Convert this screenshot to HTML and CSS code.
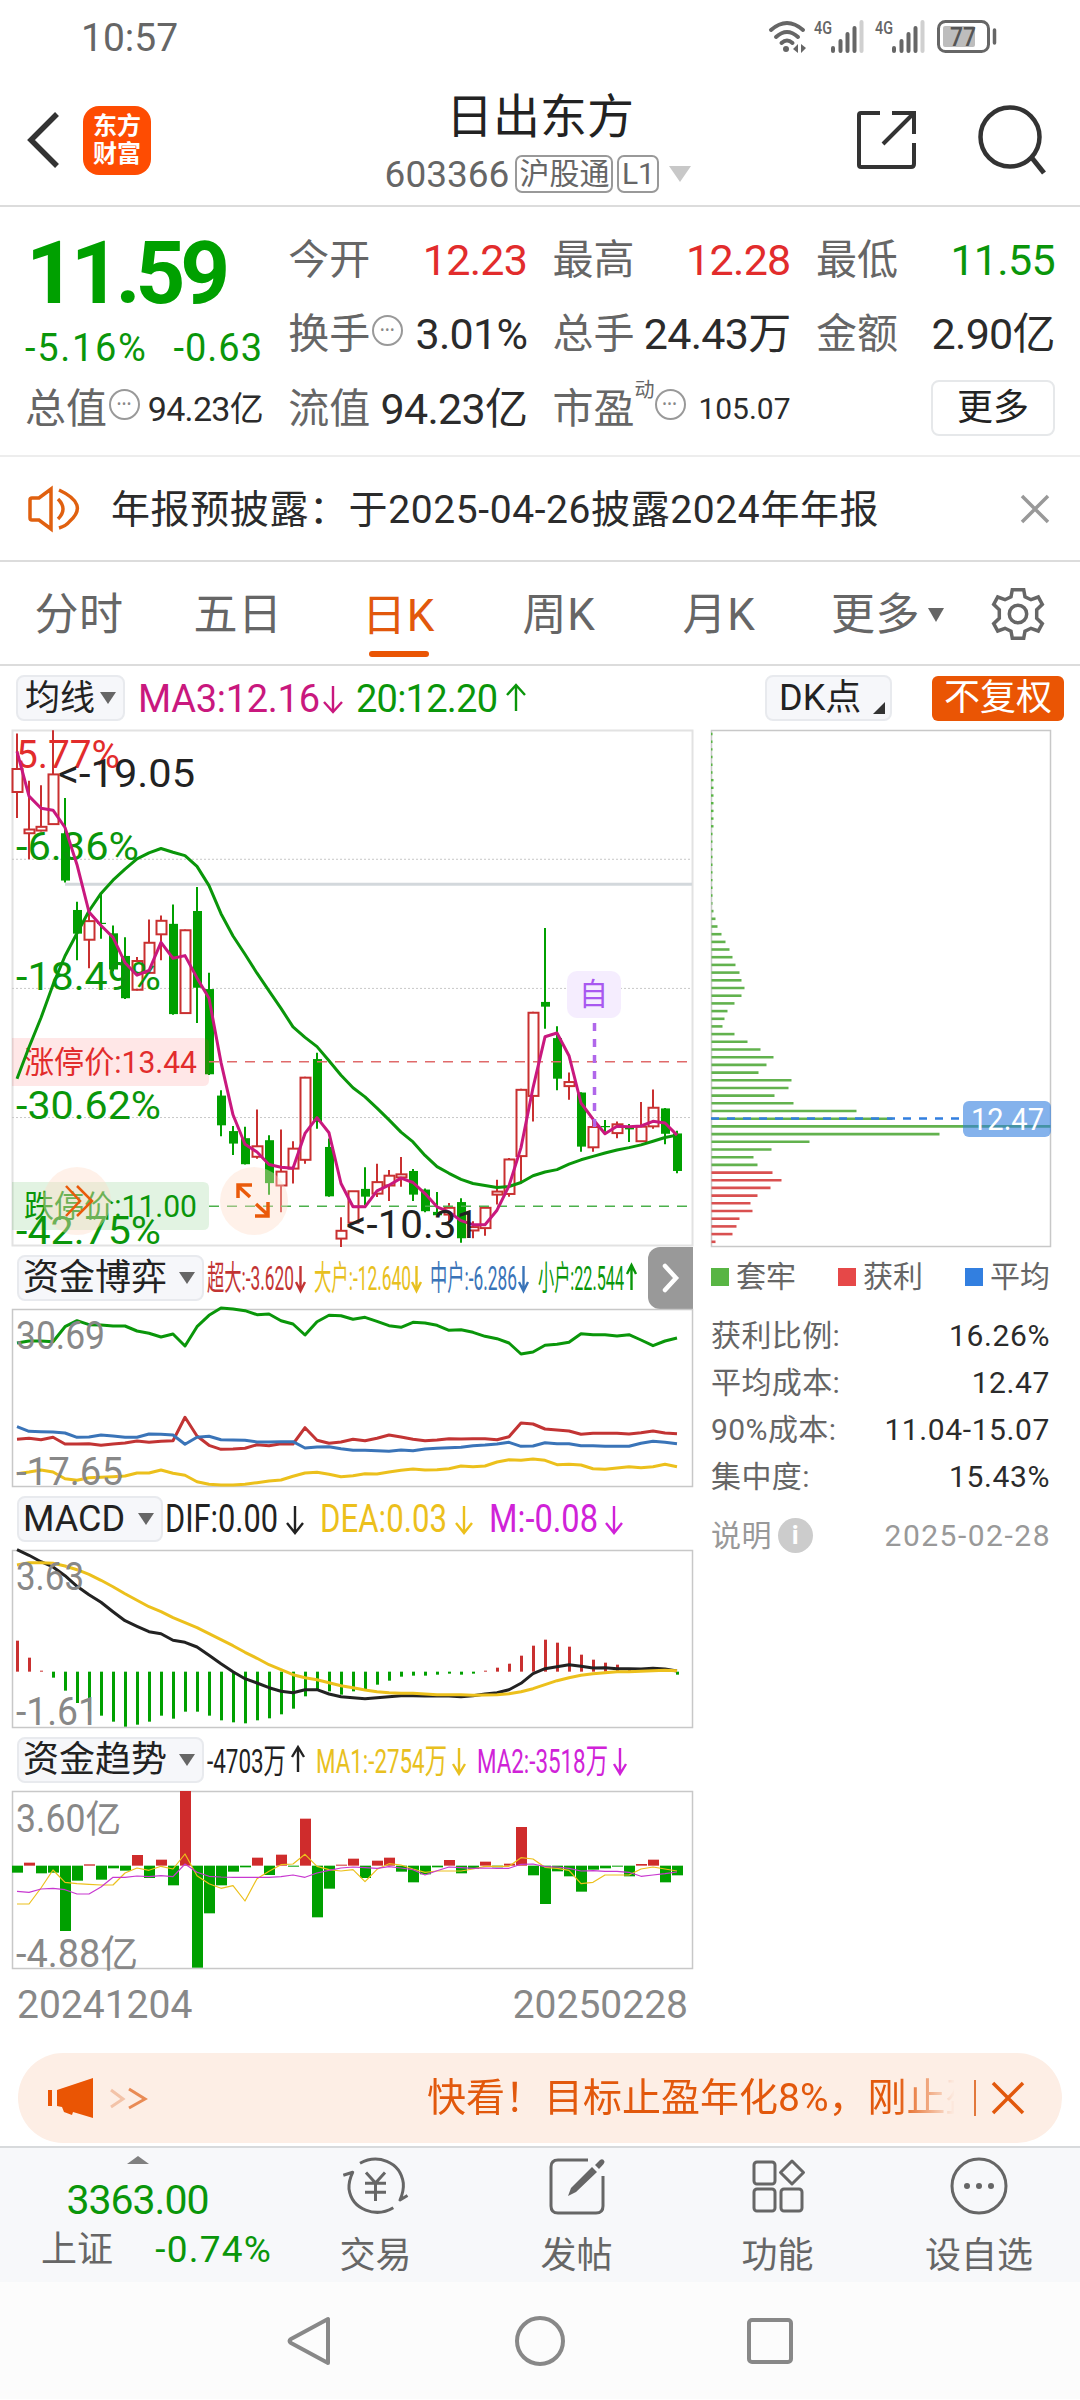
FILE: index.html
```html
<!DOCTYPE html>
<html lang="zh-CN">
<head>
    <meta charset="UTF-8">
    <meta name="viewport" content="width=device-width, initial-scale=1.0">
    <title>日出东方 603366</title>
    <link rel="stylesheet" href="styles.css">
</head>
<body>
    <!-- Status bar -->
    <div class="status-bar">
        <span class="time">10:57</span>
        <svg class="status-icons" width="232" height="36" viewBox="0 0 232 36">
            <g fill="none" stroke="#666" stroke-width="4" stroke-linecap="round">
                <path d="M3 11Q19 -3 35 11"/>
                <path d="M8 18Q19 8 30 18"/>
                <path d="M13.500 24Q19 19 24.500 24"/>
            </g>
            <circle cx="18" cy="30" r="3" fill="#666"/>
            <path d="M25 30l5-5v9zM38 29l-5-4v9z" fill="#666"/>
            <text x="46" y="15" class="net" textLength="18" lengthAdjust="spacingAndGlyphs">4G</text>
            <g stroke="#666" stroke-width="4" stroke-linecap="round">
                <path d="M65 29v3M72.500 22v10M79.500 15v17M86.500 9v23"/>
                <path d="M93.500 3v29" stroke="#d0d0d0"/>
            </g>
            <text x="107" y="15" class="net" textLength="18" lengthAdjust="spacingAndGlyphs">4G</text>
            <g stroke="#666" stroke-width="4" stroke-linecap="round">
                <path d="M126 29v3M133.500 22v10M140.500 15v17M147.500 9v23"/>
                <path d="M154.500 3v29" stroke="#d0d0d0"/>
            </g>
            <rect x="170.500" y="2.500" width="50" height="30" rx="7" fill="none" stroke="#666" stroke-width="3"/>
            <rect x="175" y="7" width="32" height="21" rx="2" fill="#bdbdbd"/>
            <text x="182" y="27" class="battery" textLength="26" lengthAdjust="spacingAndGlyphs">77</text>
            <path d="M226.500 11v13" stroke="#666" stroke-width="3.500" stroke-linecap="round"/>
        </svg>
    </div>

    <!-- Header -->
    <div class="header">
        <div class="header-side">
            <svg width="34" height="58" viewBox="0 0 34 58"><path d="M30 3L4 29L30 55" fill="none" stroke="#333" stroke-width="5.500"/></svg>
            <div class="logo"><span>东方</span><span>财富</span></div>
        </div>
        <div class="header-title">
            <div class="stock-name">日出东方</div>
            <div class="stock-code">
                <span>603366</span><span class="tag">沪股通</span><span class="tag tag-l1">L1</span>
                <svg width="22" height="16" viewBox="0 0 22 16"><path d="M0 0h22L11 16z" fill="#c8c8c8"/></svg>
            </div>
        </div>
        <div class="header-side header-right">
            <svg width="60" height="60" viewBox="0 0 60 60"><path d="M23 3H4Q2 3 2 5V55Q2 57 4 57H54Q57 57 57 54V33M35 3H57V24M57 3L26 34" fill="none" stroke="#333" stroke-width="4"/></svg>
            <svg width="70" height="72" viewBox="0 0 70 72"><circle cx="32" cy="33" r="29.500" fill="none" stroke="#333" stroke-width="4.500"/><path d="M54 54L66 69" stroke="#333" stroke-width="5"/></svg>
        </div>
    </div>

    <!-- Quote -->
    <div class="quote">
        <div class="price-box">
            <div class="price">11.59</div>
            <div class="change"><span>-5.16%</span><span>-0.63</span></div>
        </div>
        <div class="cell"><label>今开</label><b class="red">12.23</b></div>
        <div class="cell"><label>最高</label><b class="red">12.28</b></div>
        <div class="cell"><label>最低</label><b class="green">11.55</b></div>
        <div class="cell"><label>换手</label><i class="dots">•••</i><b>3.01%</b></div>
        <div class="cell"><label>总手</label><b>24.43万</b></div>
        <div class="cell"><label>金额</label><b>2.90亿</b></div>
        <div class="cell"><label>总值</label><i class="dots">•••</i><b class="small">94.23亿</b></div>
        <div class="cell"><label>流值</label><b>94.23亿</b></div>
        <div class="cell"><label>市盈</label><sup>动</sup><i class="dots">•••</i><b class="smaller">105.07</b></div>
        <div class="cell"><button class="more">更多</button></div>
    </div>

    <!-- Notice -->
    <div class="notice">
        <svg width="52" height="44" viewBox="0 0 52 44"><path d="M2 13Q2 11 4 11H11L23 2V42L11 33H4Q2 33 2 31ZM30 12Q40 22 30 32M31 3Q61 17 42 34Q38 39 31 41" fill="none" stroke="#e0600f" stroke-width="3.500"/></svg>
        <span class="notice-text">年报预披露：于2025-04-26披露2024年年报</span>
        <svg width="30" height="30" viewBox="0 0 30 30"><path d="M2 2L28 28M28 2L2 28" stroke="#999" stroke-width="3.500"/></svg>
    </div>

    <!-- Period tabs -->
    <div class="tabs">
        <span>分时</span>
        <span>五日</span>
        <span class="active">日K</span>
        <span>周K</span>
        <span>月K</span>
        <span>更多<svg width="16" height="14" viewBox="0 0 16 14"><path d="M0 0h16L8 14z" fill="#666"/></svg></span>
        <svg class="gear" width="54" height="54" viewBox="0 0 54 54"><path d="M21.300 2.700H32.700L34 9.700L40 12.700L47.300 10L51.300 17.300L45.700 22.700V31.300L51.300 36.700L47.300 44L40 41.300L34 44.300L32.700 51.300H21.300L20 44.300L14 41.300L6.700 44L2.700 36.700L8.300 31.300V22.700L2.700 17.300L6.700 10L14 12.700L20 9.700Z" fill="none" stroke="#666" stroke-width="3.500"/><circle cx="27" cy="27" r="8.700" fill="none" stroke="#666" stroke-width="3.500"/></svg>
    </div>

    <!-- Chart toolbar -->
    <div class="toolbar">
        <div class="select select-ma">均线<i class="caret"></i></div>
        <svg class="legend" width="400" height="46">
            <text x="0" y="37" textLength="182" fill="#c9187e">MA3:12.16</text><path class="arrow" d="M195 11V36M186 27L195 37L204 27" stroke="#c9187e"/>
            <text x="218" y="37" textLength="142" fill="#0a960a">20:12.20</text><path class="arrow" d="M378 36V11M369 20L378 10L387 20" stroke="#0a960a"/>
        </svg>
        <div class="select select-dk">DK点<i class="corner"></i></div>
        <div class="no-adjust">不复权</div>
    </div>

    <div class="board">
        <div class="charts">
            <svg class="chart" id="kline" width="681" height="516"></svg>

            <div class="chart-head">
                <div class="select">资金博弈<i class="caret"></i></div>
                <svg class="legend small-legend" width="440" height="46">
                    <text x="0" y="35" textLength="87" lengthAdjust="spacingAndGlyphs" fill="#c23434">超大:-3.620</text><path class="arrow" d="M93.500 11V35M89 27L93.500 36L98 27" stroke="#c23434"/>
                    <text x="107" y="35" textLength="97" lengthAdjust="spacingAndGlyphs" fill="#e8c020">大户:-12.640</text><path class="arrow" d="M209.500 11V35M205 27L209.500 36L214 27" stroke="#e8c020"/>
                    <text x="223" y="35" textLength="87" lengthAdjust="spacingAndGlyphs" fill="#3a74b8">中户:-6.286</text><path class="arrow" d="M316.500 11V35M312 27L316.500 36L321 27" stroke="#3a74b8"/>
                    <text x="331" y="35" textLength="86" lengthAdjust="spacingAndGlyphs" fill="#0a960a">小户:22.544</text><path class="arrow" d="M424.500 35V11M420 19L424.500 10L429 19" stroke="#0a960a"/>
                </svg>
                <div class="next"><svg width="18" height="30" viewBox="0 0 18 30"><path d="M3 3L14 15L3 27" fill="none" stroke="#fff" stroke-width="4.500" stroke-linecap="round"/></svg></div>
            </div>
            <svg class="chart" id="fund" width="681" height="178"></svg>

            <div class="chart-head">
                <div class="select select-macd">MACD<i class="caret"></i></div>
                <svg class="legend" width="480" height="46">
                    <text x="0" y="36" textLength="113" lengthAdjust="spacingAndGlyphs" fill="#222">DIF:0.00</text><path class="arrow" d="M130 10V36M122 27L130 37L138 27" stroke="#222"/>
                    <text x="155" y="36" textLength="127" lengthAdjust="spacingAndGlyphs" fill="#ecc01c">DEA:0.03</text><path class="arrow" d="M299 10V36M291 27L299 37L307 27" stroke="#ecc01c"/>
                    <text x="324" y="36" textLength="109" lengthAdjust="spacingAndGlyphs" fill="#d022d8">M:-0.08</text><path class="arrow" d="M449 10V36M441 27L449 37L457 27" stroke="#d022d8"/>
                </svg>
            </div>
            <svg class="chart" id="macd" width="681" height="178"></svg>

            <div class="chart-head">
                <div class="select">资金趋势<i class="caret"></i></div>
                <svg class="legend small-legend trend-legend" width="440" height="46">
                    <text x="0" y="36" textLength="79" lengthAdjust="spacingAndGlyphs" fill="#222">-4703万</text><path class="arrow" d="M91 35V11M85 20L91 10L97 20" stroke="#222"/>
                    <text x="109" y="36" textLength="131" lengthAdjust="spacingAndGlyphs" fill="#e8c020">MA1:-2754万</text><path class="arrow" d="M252 11V35M246 27L252 37L258 27" stroke="#e8c020"/>
                    <text x="270" y="36" textLength="131" lengthAdjust="spacingAndGlyphs" fill="#d022d8">MA2:-3518万</text><path class="arrow" d="M413 11V35M407 27L413 37L419 27" stroke="#d022d8"/>
                </svg>
            </div>
            <svg class="chart" id="trend" width="681" height="178"></svg>

            <div class="dates"><span>20241204</span><span>20250228</span></div>
        </div>

        <div class="chips">
            <svg class="chart" id="chips" width="340" height="516"></svg>
            <div class="chip-legend">
                <span><i class="sq sq-green"></i>套牢</span>
                <span><i class="sq sq-red"></i>获利</span>
                <span><i class="sq sq-blue"></i>平均</span>
            </div>
            <div class="chip-row"><label>获利比例:</label><b>16.26%</b></div>
            <div class="chip-row"><label>平均成本:</label><b>12.47</b></div>
            <div class="chip-row"><label>90%成本:</label><b>11.04-15.07</b></div>
            <div class="chip-row"><label>集中度:</label><b>15.43%</b></div>
            <div class="chip-row chip-note"><label>说明<i class="info">i</i></label><span>2025-02-28</span></div>
        </div>
    </div>

    <!-- Promo banner -->
    <div class="banner">
        <svg width="102" height="42" viewBox="0 0 102 42">
            <path d="M4 13V29" stroke="#ea5504" stroke-width="4"/>
            <path d="M11 13L47 1V41L27 35L26 38L18 35L16 30L11 29Z" fill="#ea5504"/>
            <path d="M65 13L77 22L65 30" fill="none" stroke="#f3c3a8" stroke-width="3"/>
            <path d="M83 12L99 22L83 31" fill="none" stroke="#e98b55" stroke-width="3"/>
        </svg>
        <div class="banner-text">快看！目标止盈年化8%，刚止盈</div>
        <i class="banner-line"></i>
        <svg width="34" height="34" viewBox="0 0 34 34"><path d="M2 2L32 32M32 2L2 32" stroke="#e2580c" stroke-width="3.500"/></svg>
    </div>

    <!-- Bottom bar -->
    <div class="bottom-bar">
        <div class="index">
            <svg width="22" height="8" viewBox="0 0 22 8"><path d="M0 8L11 0L22 8z" fill="#808080"/></svg>
            <div class="index-value">3363.00</div>
            <div class="index-row"><span>上证</span><span class="green">-0.74%</span></div>
        </div>
        <div class="item">
            <svg width="68" height="60" viewBox="0 0 68 60"><g fill="none" stroke="#666" stroke-width="3" stroke-linejoin="round"><path d="M18 7.300C35 -2 58 5 61.300 27Q62 35 58 44L65.500 39.500M51.300 51.700C34 62 10 54 7 33Q6.500 25 10.700 16.300L1.300 19.300"/><path d="M24 16.500L33.500 27L43 16.500M33.500 27V45M23 27.300H44M23 36.300H44"/></g></svg>
            <span>交易</span>
        </div>
        <div class="item">
            <svg width="60" height="60" viewBox="0 0 60 60"><path d="M41 4H11Q4 4 4 11V50Q4 57 11 57H49Q56 57 56 50V20" fill="none" stroke="#666" stroke-width="3"/><path d="M45 11L50 16L29 36L21 40L24 32ZM48 9L53 4Q56 2 57.500 5.500Q58 7 52 13Z" fill="#666"/></svg>
            <span>发帖</span>
        </div>
        <div class="item">
            <svg width="56" height="60" viewBox="0 0 56 60"><g fill="none" stroke="#666" stroke-width="3"><rect x="4" y="6" width="21" height="22" rx="3"/><rect x="4" y="33" width="21" height="22" rx="3"/><rect x="31" y="33" width="21" height="22" rx="3"/><path d="M42 5L53.500 16.500L42 28L30.500 16.500Z" stroke-linejoin="round"/></g></svg>
            <span>功能</span>
        </div>
        <div class="item">
            <svg width="60" height="60" viewBox="0 0 60 60"><circle cx="30" cy="30" r="27" fill="none" stroke="#666" stroke-width="3"/><g fill="#666"><circle cx="18" cy="30" r="3"/><circle cx="30" cy="30" r="3"/><circle cx="42" cy="30" r="3"/></g></svg>
            <span>设自选</span>
        </div>
    </div>

    <!-- System navigation -->
    <div class="nav-bar">
        <svg width="46" height="52" viewBox="0 0 46 52"><path d="M41 4V48L4 28Q1 26 4 24Z" fill="none" stroke="#888" stroke-width="4" stroke-linejoin="round"/></svg>
        <svg width="52" height="52" viewBox="0 0 52 52"><circle cx="26" cy="26" r="23" fill="none" stroke="#888" stroke-width="4"/></svg>
        <svg width="46" height="46" viewBox="0 0 46 46"><rect x="2" y="2" width="42" height="42" rx="3" fill="none" stroke="#888" stroke-width="4"/></svg>
    </div>

    <script src="script.js"></script>
</body>
</html>
```
FILE: styles.css
```css
* {
    box-sizing: border-box;
}

body {
    font-family: Roboto, 'Noto Sans CJK SC', sans-serif;
    background-color: #fff;
    color: #2b2b2b;
    margin: 0;
    width: 1080px;
    line-height: 1;
}

svg {
    display: block;
    flex-shrink: 0;
    overflow: visible;
}

b, i, label {
    font-weight: normal;
    font-style: normal;
}

.red { color: #e22c2c !important; }
.green { color: #0a960a !important; }

/* Status bar */
.status-bar {
    height: 72px;
    padding: 2px 80px 0 81px;
    display: flex;
    align-items: center;
    justify-content: space-between;
    color: #666;
}

.time {
    font-size: 39px;
    padding-top: 3px;
}

.net {
    font-size: 18px;
    font-weight: 500;
    fill: #666;
}

.battery {
    font-size: 25px;
    font-weight: 500;
    fill: #555;
}

/* Header */
.header {
    height: 135px;
    border-bottom: 2px solid #dcdcdc;
    display: grid;
    grid-template-columns: 280px 520px 280px;
}

.header-side {
    display: flex;
    align-items: center;
    gap: 22px;
    padding: 3px 0 0 27px;
}

.header-right {
    justify-content: flex-end;
    gap: 61px;
    padding: 3px 32px 0 0;
}

.logo {
    width: 68px;
    height: 69px;
    border-radius: 16px;
    background-color: #fe4c02;
    color: #fff;
    font-size: 24px;
    font-weight: bold;
    display: flex;
    flex-direction: column;
    align-items: center;
    justify-content: center;
    gap: 4px;
}

.header-title {
    text-align: center;
    padding-top: 20px;
}

.stock-name {
    font-size: 47px;
    line-height: 50px;
    color: #222;
}

.stock-code {
    display: flex;
    align-items: center;
    justify-content: center;
    margin-top: 13px;
    font-size: 37px;
    color: #666;
    padding-right: 4px;
}

.tag {
    border: 2px solid #999;
    border-radius: 7px;
    height: 38px;
    width: 98px;
    font-size: 30px;
    line-height: 34px;
    margin-left: 6px;
}

.tag-l1 {
    width: 42px;
    margin-left: 4px;
    margin-right: 10px;
}

/* Quote */
.quote {
    height: 250px;
    border-bottom: 2px solid #ededed;
    padding: 15px 25px 0 25px;
    display: grid;
    grid-template-columns: 238px 239px 238px 239px;
    grid-auto-rows: 74.5px;
    column-gap: 25.3px;
}

.price-box {
    grid-row: span 2;
    color: #00a000;
}

.price {
    font-size: 87px;
    font-weight: bold;
    letter-spacing: -5.2px;
    margin: 8px 0 0 1px;
}

.change {
    display: flex;
    justify-content: space-between;
    font-size: 38px;
    color: #0a960a;
    margin-top: 12px;
}

.change span:first-child {
    letter-spacing: 1.7px;
}

.change span:last-child {
    letter-spacing: 1px;
}

.cell {
    display: flex;
    align-items: center;
    white-space: nowrap;
}

.cell label {
    font-size: 41px;
    padding-top: 2px;
    color: #666;
}

.cell b {
    font-size: 43px;
    margin-left: auto;
    padding-top: 2px;
    letter-spacing: -0.7px;
}

.cell .small {
    font-size: 34px;
}

.cell .smaller {
    font-size: 30px;
    letter-spacing: 0;
}

.cell sup {
    font-size: 20px;
    color: #666;
    align-self: flex-start;
    margin-top: 9px;
    margin-right: -2px;
}

.dots {
    width: 31px;
    height: 31px;
    border: 2px solid #999;
    border-radius: 50%;
    color: #888;
    font-size: 12px;
    line-height: 26px;
    letter-spacing: 1px;
    text-align: center;
    margin: -7px 0 0 2px;
}

.more {
    margin-left: auto;
    width: 124px;
    height: 56px;
    border: 2px solid #e6e8ea;
    border-radius: 8px;
    background-color: #fff;
    font-family: inherit;
    font-size: 36px;
    color: #222;
    padding: 0;
    line-height: 1;
}

/* Notice */
.notice {
    height: 105px;
    border-bottom: 2px solid #dcdcdc;
    padding: 1px 30px 0 28px;
    display: flex;
    align-items: center;
}

.notice-text {
    flex: 1;
    margin-left: 31px;
    font-size: 39px;
    letter-spacing: 0.6px;
    padding-top: 2px;
}

/* Tabs */
.tabs {
    height: 104px;
    border-bottom: 2px solid #dcdcdc;
    padding-top: 2px;
    display: grid;
    grid-template-columns: 158px 160px 161px 160px 160px 177px 84px;
    align-items: center;
    justify-items: center;
    font-size: 44px;
    color: #666;
}

.tabs span {
    display: flex;
    align-items: center;
    letter-spacing: 0.6px;
    padding-top: 2px;
}

.tabs span svg {
    margin-left: 8px;
}

.tabs .active {
    color: #e2580c;
    flex-direction: column;
    margin-bottom: -20px;
}

.tabs .active::after {
    content: "";
    width: 60px;
    height: 6px;
    margin-top: 13px;
    border-radius: 3px;
    background-color: #ea5504;
}

/* Toolbar and chart headers */
.toolbar {
    height: 64px;
    padding: 0 16px;
    display: flex;
    align-items: center;
}

.chart-head {
    height: 63px;
    padding-left: 5px;
    display: flex;
    align-items: center;
}

.select {
    height: 46px;
    width: 187px;
    border: 2px solid #e8eaee;
    border-radius: 8px;
    background-color: #f6f7fa;
    color: #222;
    font-size: 36px;
    display: flex;
    align-items: center;
    justify-content: space-between;
    padding: 0 7px 0 4px;
    flex-shrink: 0;
}

.select-ma {
    width: 109px;
    font-size: 35px;
    padding-left: 7px;
}

.select-macd {
    width: 146px;
}

.select-dk {
    width: 127px;
    margin-left: auto;
    padding: 0 5px 0 12px;
}

.caret {
    border: 8px solid transparent;
    border-top: 12px solid #666;
    border-bottom: 0;
}

.corner {
    border-left: 12px solid transparent;
    border-bottom: 12px solid #333;
    align-self: flex-end;
    margin-bottom: 5px;
}

.no-adjust {
    width: 132px;
    height: 45px;
    margin-left: 40px;
    border-radius: 6px;
    background-color: #ea5504;
    color: #fff;
    font-size: 36px;
    line-height: 45px;
    text-align: center;
}

.legend {
    margin-left: 2px;
    font-size: 38px;
}

.toolbar .legend {
    margin-left: 13px;
}

.small-legend {
    font-size: 34px;
    margin-left: 3px;
}

.arrow {
    fill: none;
    stroke-width: 2.4px;
}

.next {
    width: 45px;
    height: 62px;
    margin-left: 1px;
    background-color: #999;
    border-radius: 12px 0 0 12px;
    display: flex;
    align-items: center;
    justify-content: center;
}

/* Charts */
.board {
    display: flex;
    padding-left: 12px;
    gap: 18px;
}

.charts {
    width: 681px;
}

.chart .frame {
    fill: none;
    stroke: #c8c8c8;
    stroke-width: 1.5px;
}

#kline .frame {
    stroke: #e2e2e2;
    stroke-width: 2px;
}

.axis {
    font-size: 38px;
    fill: #888;
}

.mark {
    font-size: 39px;
    fill: #222;
}

.badge {
    font-size: 31px;
}

.dates {
    display: flex;
    justify-content: space-between;
    padding: 17px 5px 0 5px;
    height: 84px;
    font-size: 39px;
    color: #888;
}

/* Chip distribution */
.chips {
    width: 339px;
}

.chip-legend {
    display: flex;
    justify-content: space-between;
    height: 62px;
    align-items: center;
    font-size: 30px;
    color: #666;
}

.chip-legend span {
    display: flex;
    align-items: center;
}

.sq {
    width: 18px;
    height: 18px;
    margin-right: 7px;
}

.sq-green { background-color: #58b544; }
.sq-red { background-color: #e64848; }
.sq-blue { background-color: #327fe0; }

.chip-row {
    height: 47px;
    display: flex;
    align-items: center;
    justify-content: space-between;
    font-size: 30px;
}

.chip-row label {
    color: #666;
    display: flex;
    align-items: center;
    letter-spacing: 0.4px;
}

.chip-row b {
    letter-spacing: 0.6px;
}

.chip-legend + .chip-row {
    margin-top: 4px;
}

.chip-note,
.chip-note label {
    color: #999;
}

.chip-note {
    margin-top: 12px;
}

.chip-note span {
    letter-spacing: 1.5px;
    margin-right: -1px;
}

.info {
    width: 35px;
    height: 35px;
    border-radius: 50%;
    background-color: #ccc;
    color: #fff;
    font-size: 26px;
    font-weight: bold;
    line-height: 35px;
    text-align: center;
    margin-left: 6px;
}

/* Banner */
.banner {
    height: 90px;
    margin: 0 18px 3px 18px;
    border-radius: 45px;
    background-color: #fdeee5;
    padding: 0 37px 0 28px;
    display: flex;
    align-items: center;
}

.banner-text {
    width: 528px;
    margin-left: 279px;
    overflow: hidden;
    white-space: nowrap;
    font-size: 39px;
    line-height: 60px;
    color: #e2580c;
    -webkit-mask-image: linear-gradient(to right, #000 470px, transparent 528px);
    mask-image: linear-gradient(to right, #000 470px, transparent 528px);
}

.banner-line {
    width: 2px;
    height: 36px;
    background-color: #e2783c;
    margin: 0 15px 0 20px;
}

/* Bottom bar */
.bottom-bar {
    height: 136px;
    border-top: 2px solid #d8dadc;
    background-color: #f7f8fa;
    display: grid;
    grid-template-columns: 275px 201px 201px 201px 202px;
}

.index {
    display: flex;
    flex-direction: column;
    align-items: center;
    padding-top: 8px;
    color: #666;
}

.index-value {
    font-size: 41px;
    letter-spacing: -1px;
    color: #0a960a;
    margin-top: 16px;
}

.index-row {
    width: 231px;
    margin-top: 10px;
    margin-left: 41px;
    align-self: flex-start;
    display: flex;
    justify-content: space-between;
    align-items: center;
    font-size: 36px;
}

.index-row .green {
    font-size: 37px;
    letter-spacing: 1.2px;
}

.item {
    display: flex;
    flex-direction: column;
    align-items: center;
    padding-top: 8px;
    font-size: 36px;
    color: #666;
}

.item span {
    margin-top: 22px;
}

/* System navigation */
.nav-bar {
    height: 117px;
    background-color: #fcfcfc;
    display: flex;
    align-items: center;
    justify-content: center;
    gap: 181px;
}
```
FILE: script.js
```js
const RED = '#c93030';
const GREEN = '#00a000';
const X0 = 5;      // first bar centre
const STEP = 12;   // distance between bars

// [high, open/close top, open/close bottom, low, up]
const candles = [
    [37,142,210,287,1],[177,321,332,409,1],[190,313,324,327,1],[27,158,305,307,1],[228,332,472,478,0],
    [535,559,629,708,0],[565,592,647,731,1],[512,597,600,644,0],[605,628,735,740,0],[640,695,820,822,0],
    [698,710,795,797,1],[587,656,745,745,1],[575,591,631,708,1],[543,600,867,869,0],[617,619,864,866,1],
    [491,562,789,893,0],[745,793,1045,1047,0],[1092,1108,1196,1228,0],[1198,1213,1250,1284,0],[1200,1234,1311,1312,0],
    [1149,1258,1289,1295,1],[1225,1240,1367,1401,0],[1208,1333,1374,1453,1],[1243,1265,1324,1368,1],[1052,1055,1298,1310,1],
    [981,1000,1186,1206,0],[1235,1260,1406,1407,0],[1468,1508,1531,1556,1],[1390,1391,1484,1488,1],[1320,1384,1407,1432,0],
    [1310,1364,1398,1408,1],[1328,1345,1374,1420,1],[1290,1341,1350,1378,1],[1325,1331,1401,1420,0],[1383,1386,1450,1453,0],
    [1393,1452,1462,1463,0],[1426,1440,1460,1485,1],[1412,1423,1530,1543,0],[1480,1497,1507,1530,1],[1438,1440,1500,1523,1],
    [1357,1392,1401,1430,1],[1293,1297,1399,1407,1],[1088,1091,1287,1368,1],[860,863,1109,1185,1],[612,831,845,910,0],
    [903,938,1058,1092,0],[1040,1068,1080,1120,1],[1098,1099,1259,1274,0],[1180,1201,1261,1274,1],[1180,1198,1200,1215,0],
    [1185,1193,1219,1234,1],[1192,1203,1208,1245,0],[1127,1200,1243,1245,1],[1090,1144,1199,1206,1],[1145,1146,1221,1252,0],
    [1212,1220,1331,1338,0]
];
const ma3 = [90,222,258,264,315,425,565,605,640,715,752,738,655,702,694,760,820,1010,1165,1252,1275,1312,1320,1323,1220,1173,1218,1368,1437,1437,1390,1373,1352,1365,1398,1437,1452,1478,1490,1490,1447,1375,1262,1085,934,923,990,1130,1178,1221,1199,1200,1198,1184,1189,1225];
const ma20 = [1058,965,878,780,695,628,562,510,471,438,408,390,377,388,398,430,487,570,636,690,746,798,850,905,936,963,1005,1048,1085,1112,1145,1180,1216,1245,1285,1318,1338,1356,1368,1374,1380,1377,1365,1345,1334,1327,1311,1298,1288,1278,1269,1262,1254,1243,1232,1225];

const fund = {
    '#0a960a': [311,305,305,307,262,244,256,257,260,260,275,282,293,284,320,262,228,206,209,214,226,224,244,254,287,247,228,229,240,234,246,259,264,249,251,258,273,271,279,291,298,311,344,338,318,315,309,283,286,286,290,286,302,319,305,296],
    '#c23434': [600,597,601,594,614,614,613,618,614,611,605,609,606,604,534,590,618,630,629,627,616,619,613,614,565,603,612,608,600,604,597,587,593,600,604,602,598,599,598,598,601,592,551,554,569,572,575,585,582,582,582,584,580,575,581,583],
    '#3a74b8': [562,576,577,578,581,594,593,587,590,594,594,584,585,587,615,594,591,601,602,603,608,608,607,607,626,623,622,628,633,633,634,636,632,634,629,627,625,624,619,617,614,609,621,620,610,613,613,619,619,621,621,621,612,606,609,613],
    '#ecc01c': [703,698,692,698,718,723,715,714,712,710,701,701,692,702,708,727,735,737,737,735,730,725,722,711,701,699,705,712,709,703,704,698,693,689,692,691,688,680,682,680,668,661,663,659,663,676,675,677,688,690,686,682,685,682,675,682]
};

const macdBars = [453,504,543,564,603,640,665,678,696,711,705,696,678,687,666,666,678,692,698,701,692,686,674,657,620,603,605,615,605,598,585,573,561,558,558,555,552,555,552,543,534,522,498,468,450,459,471,495,510,519,525,535,538,537,542,555];
const dif = [180,197,216,232,258,290,315,338,366,393,410,426,432,452,458,472,497,522,546,567,580,594,605,609,600,600,613,621,624,627,624,621,618,618,619,619,619,621,618,613,609,600,581,552,537,531,525,530,535,534,537,537,538,536,538,544];
const dea = [226,219,219,221,229,240,254,272,291,312,332,351,366,384,399,414,432,450,468,488,506,525,540,555,564,570,579,588,594,601,606,609,611,611,613,615,615,615,617,616,615,612,606,597,585,573,564,557,552,549,546,546,545,543,542,543];

const trendBars = [429,399,431,429,604,453,404,450,416,423,376,445,390,467,184,714,551,467,426,413,384,436,375,411,267,563,477,405,387,445,393,384,426,458,434,413,391,431,418,396,413,402,292,437,523,425,440,486,420,416,411,440,403,390,458,437];
const trendMa1 = [523,523,475,421,458,462,464,466,466,430,415,422,410,418,373,438,462,476,468,514,447,425,405,403,374,410,420,424,420,456,419,402,406,418,428,424,424,424,418,410,410,410,384,388,413,416,422,462,458,436,436,436,418,412,418,424];
const trendMa2 = [485,488,478,476,480,493,493,472,443,443,439,441,438,441,403,428,440,442,443,443,443,443,441,436,443,430,422,415,412,414,416,411,415,420,436,423,412,414,416,415,416,416,404,403,411,412,416,424,423,425,425,428,440,436,432,427];

const chipBars = [1,2,4,6,10,14,18,21,24,28,30,33,30,23,16,13,11,23,36,49,62,55,47,80,77,63,82,145,181,339,228,98,60,42,46,61,70,59,46,39,41,28,25,21,4];
const CHIP_PROFIT = 35;  // bars from here down are in profit

const x = i => X0 + STEP * i;

function line(data, y, color, width) {
    const points = data.map((v, i) => `${x(i)},${y(v).toFixed(1)}`).join(' ');
    return `<polyline points="${points}" fill="none" stroke="${color}" stroke-width="${width}" stroke-linejoin="round"/>`;
}

function hline(x1, x2, y, color, width, dash) {
    return `<path d="M${x1} ${y}H${x2}" stroke="${color}" stroke-width="${width}" stroke-dasharray="${dash}"/>`;
}

function text(cls, tx, ty, len, str, color) {
    const fill = color ? `style="fill:${color}"` : '';
    return `<text class="${cls}" x="${tx}" y="${ty}" textLength="${len}" lengthAdjust="spacingAndGlyphs" ${fill}>${str}</text>`;
}

function frame(w, h) {
    return `<rect class="frame" x="0.5" y="0.5" width="${w}" height="${h}"/>`;
}

// Candlestick chart
function drawKline() {
    const y = v => v / 2.958 - 9;
    let s = frame(680, 515);
    [409, 791, 1173].forEach(v => s += hline(0, 680, y(v), '#c8c8c8', 1, '2 2'));
    s += hline(53, 680, y(483), '#d3d8dc', 3, 'none');
    candles.forEach(([h, t, b, l, up], i) => {
        const cx = x(i);
        const top = y(t);
        const height = Math.max(y(b) - top, 1.2);
        if (up) {
            s += `<path d="M${cx} ${y(h)}V${top}M${cx} ${y(b)}V${y(l)}" stroke="${RED}" stroke-width="2"/>`;
            s += `<rect x="${cx - 4.5}" y="${top}" width="10" height="${height}" fill="none" stroke="${RED}" stroke-width="2"/>`;
        } else {
            s += `<path d="M${cx} ${y(h)}V${y(l)}" stroke="${GREEN}" stroke-width="2"/>`;
            s += `<rect x="${cx - 4}" y="${top}" width="9" height="${height}" fill="${GREEN}"/>`;
        }
    });
    s += '<path d="M0 308H191Q197 308 197 314V350Q197 356 191 356H0Z" fill="#ff3c3c" fill-opacity="0.12"/>';
    s += '<path d="M0 452H191Q197 452 197 458V494Q197 500 191 500H0Z" fill="#14a014" fill-opacity="0.12"/>';
    s += hline(197, 680, y(1008), '#e06a6a', 1.5, '10 8');
    s += hline(197, 680, y(1435), '#4bb04b', 1.5, '10 8');
    s += text('axis', 4, 38, 104, '5.77%', '#e22c2c');
    s += text('axis', 4, 130, 123, '-6.36%', '#0a960a');
    s += text('axis', 4, 260, 145, '-18.49%', '#0a960a');
    s += text('axis', 4, 389, 145, '-30.62%', '#0a960a');
    s += text('axis', 4, 514, 145, '-42.75%', '#0a960a');
    s += text('badge', 12, 343, 173, '涨停价:13.44', '#e22c2c');
    s += text('badge', 12, 487, 173, '跌停价:11.00', '#0a960a');
    s += line(ma20, y, '#0a960a', 3);
    s += line(ma3, y, '#c9187e', 3);
    s += text('mark', 46, 57, 137, '&lt;-19.05');
    s += text('mark', 334, 508, 133, '&lt;-10.31');
    s += '<path d="M582.5 293V398" stroke="#b067ea" stroke-width="3.5" stroke-dasharray="8 8"/>';
    s += '<rect x="555" y="241" width="54" height="47" rx="10" fill="#f5edfe"/>';
    s += text('badge', 567, 275, 29, '自', '#a858f0');
    s += '<circle cx="65" cy="471" r="34" fill="#ffdcc8" fill-opacity="0.4"/>';
    s += '<circle cx="242" cy="471" r="34" fill="#ffdcc8" fill-opacity="0.4"/>';
    s += '<g fill="none" stroke="#ea5a0a" stroke-width="2.5"><path d="M54 456L68 471L54 486M65 456L80 471L65 486"/>';
    s += '<path stroke-width="3.5" d="M238 467L226 456M226 468V455H240M244 474L256 485M256 472V486H243"/></g>';
    document.getElementById('kline').innerHTML = s;
}

function drawFund() {
    const y = v => (v - 209) / 3;
    let s = frame(680, 177);
    for (const color in fund) s += line(fund[color], y, color, 3);
    s += text('axis', 4, 40, 89, '30.69');
    s += text('axis', 4, 176, 107, '-17.65');
    document.getElementById('fund').innerHTML = s;
}

function drawMacd() {
    const y = v => (v - 181) / 3;
    let s = frame(680, 177);
    macdBars.forEach((v, i) => {
        s += `<path d="M${x(i) + 0.5} ${y(546)}V${y(v)}" stroke="${v < 546 ? RED : GREEN}" stroke-width="3"/>`;
    });
    s += line(dif, y, '#222', 3);
    s += line(dea, y, '#ecc01c', 3);
    s += text('axis', 4, 40, 68, '3.63');
    s += text('axis', 4, 175, 83, '-1.61');
    document.getElementById('macd').innerHTML = s;
}

function drawTrend() {
    const y = v => (v - 184) / 3;
    let s = frame(680, 177);
    trendBars.forEach((v, i) => {
        const up = v < 408;
        s += `<rect x="${x(i) - 5}" y="${up ? y(v) : y(408)}" width="11" height="${Math.abs(v - 408) / 3}" fill="${up ? '#cf2c2c' : GREEN}"/>`;
    });
    s += line(trendMa1, y, '#ecc01c', 1.2);
    s += line(trendMa2, y, '#c838d0', 1.2);
    s += text('axis', 4, 41, 105, '3.60亿');
    s += text('axis', 4, 176, 122, '-4.88亿');
    document.getElementById('trend').innerHTML = s;
}

// Chip distribution
function drawChips() {
    let s = frame(339, 516);
    for (let i = 0; i < 22; i++) {
        s += hline(0, i > 5 && i < 13 ? 2.5 : 1.5, 4 + i * 7.69, '#58b544', 2.4, 'none');
    }
    chipBars.forEach((w, i) => {
        s += hline(0.5, w + 0.5, (173.4 + i * 7.69).toFixed(1), i < CHIP_PROFIT ? '#62b24e' : '#d95050', 2.6, 'none');
    });
    s += hline(0, 248, 388.5, '#327fe0', 2.6, '8 8');
    s += '<rect x="252" y="371" width="88" height="36" rx="6" fill="#327fe0" fill-opacity="0.6"/>';
    s += text('badge', 260, 400, 73, '12.47', '#fff');
    document.getElementById('chips').innerHTML = s;
}

drawKline();
drawFund();
drawMacd();
drawTrend();
drawChips();
```
